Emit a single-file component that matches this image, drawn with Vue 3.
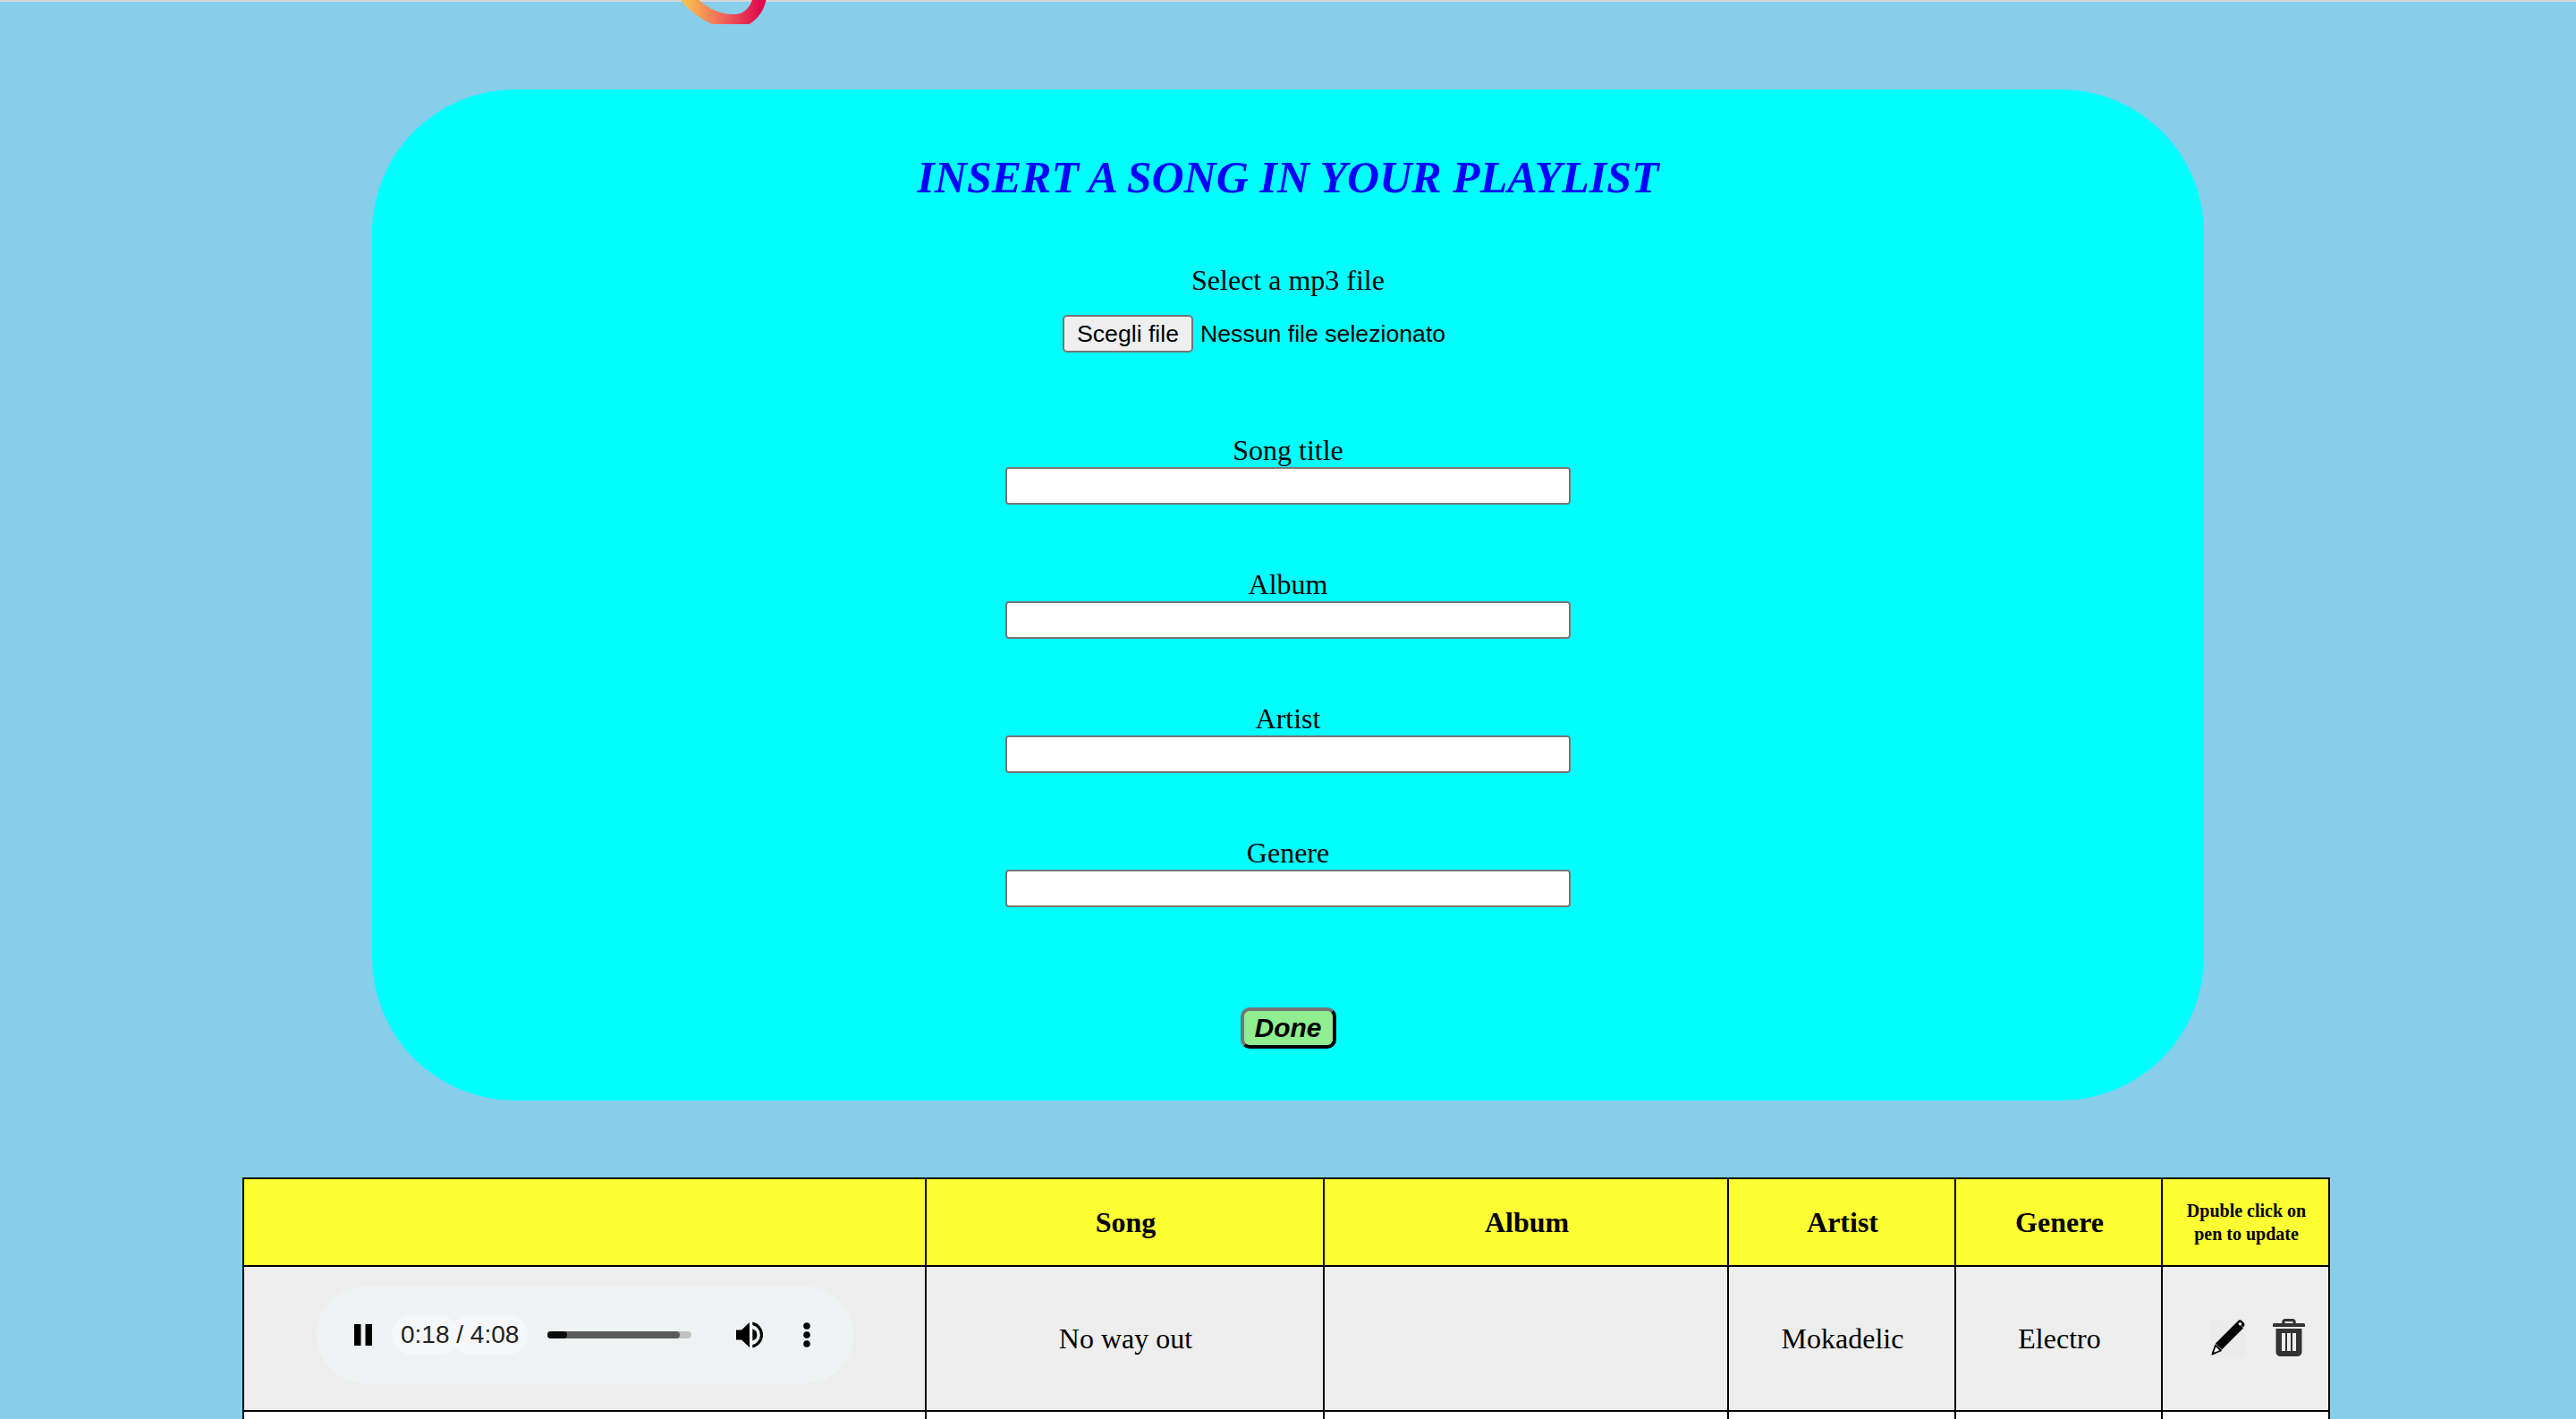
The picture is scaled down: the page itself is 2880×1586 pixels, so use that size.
<template>
  <div class="page">
    <div class="top-strip"></div>

    <!-- logo is cut by the top of the window -->
    <svg class="logo" width="110" height="27" viewBox="0 0 110 27" aria-hidden="true">
      <defs>
        <linearGradient id="logo-grad" x1="0" y1="0" x2="1" y2="0">
          <stop offset="0" stop-color="#fbbf4f" />
          <stop offset="0.5" stop-color="#f0665a" />
          <stop offset="1" stop-color="#de0a4e" />
        </linearGradient>
      </defs>
      <path d="M14 -6C28 13 48 24 70 23.500C86 23 96 10 98 -6" fill="none" stroke="url(#logo-grad)" stroke-width="15" />
    </svg>

    <form class="card" @submit.prevent>
      <h2 class="card__title">INSERT A SONG IN YOUR PLAYLIST</h2>

      <label class="card__label card__label--file" for="file-input">Select a mp3 file</label>
      <div class="file-row">
        <button id="file-input" type="button" class="file-btn">Scegli file</button>
        <span class="file-name">Nessun file selezionato</span>
      </div>

      <div v-for="f in fields" :key="f" class="field">
        <label class="card__label">{{ f }}</label>
        <input class="field__input" type="text" />
      </div>

      <button type="submit" class="done-btn">Done</button>
    </form>

    <table class="songs">
      <colgroup>
        <col v-for="w in colWidths" :key="w" :style="{ width: w + 'px' }" />
      </colgroup>
      <thead>
        <tr>
          <th></th>
          <th>Song</th>
          <th>Album</th>
          <th>Artist</th>
          <th>Genere</th>
          <th class="songs__hint">Dpuble click on<br />pen to update</th>
        </tr>
      </thead>
      <tbody>
        <tr class="songs__row--grey">
          <td>
            <div class="player">
              <svg class="player__pause" width="20" height="24" viewBox="0 0 20 24"><path d="M0 0h7.500v24H0zM12.500 0H20v24h-7.500z" fill="#000" /></svg>
              <div class="player__time">
                <span class="player__halo">0:18</span><span class="player__halo player__halo--rest">&nbsp;/ 4:08</span>
              </div>
              <div class="player__track">
                <div class="player__buffer" :style="{ width: '148px' }"></div>
                <div class="player__played" :style="{ width: '22px' }"></div>
              </div>
              <svg class="player__volume" width="30" height="30" viewBox="0 0 30 30">
                <path d="M0 9.500h6L15 1v28l-9-8.500H0z" fill="#000" />
                <path d="M18.300 8.500a6.700 6.700 0 0 1 0 13z" fill="#000" />
                <path d="M18.300 0.500a14.800 14.800 0 0 1 0 29v-3.600a11.200 11.200 0 0 0 0-21.800z" fill="#000" />
              </svg>
              <svg class="player__more" width="8" height="28" viewBox="0 0 8 28">
                <circle cx="4" cy="4" r="3.800" fill="#000" />
                <circle cx="4" cy="14" r="3.800" fill="#000" />
                <circle cx="4" cy="24" r="3.800" fill="#000" />
              </svg>
            </div>
          </td>
          <td>No way out</td>
          <td></td>
          <td>Mokadelic</td>
          <td>Electro</td>
          <td>
            <div class="actions">
              <svg class="actions__pen" width="40" height="42" viewBox="0 0 40 42">
                <rect width="40" height="42" fill="#ebebeb" />
                <path d="M30 3.500L37 10.500 13 34.500l-7-7z" fill="#000" />
                <path d="M31 2.500c1.500-1.500 3.200-1.500 4.500-.2l2 2c1.300 1.300 1.300 3 0 4.500l-.7.700-6.800-6z" fill="#000" />
                <circle cx="33.500" cy="5.800" r="1.800" fill="#e4e4e4" />
                <path d="M6 29.500l6 6-9.500 4z" fill="#fff" stroke="#000" stroke-width="1.800" stroke-linejoin="round" />
                <path d="M1.500 40.500l1.500-4.500 3 3z" fill="#000" />
              </svg>
              <svg class="actions__trash" width="36" height="42" viewBox="0 0 36 42">
                <path fill-rule="evenodd" d="M10.300 3.500C10.300 1.500 11.800 0 13.800 0h8.400c2 0 3.500 1.500 3.500 3.500V5h8.800C35.300 5 36 5.700 36 6.500V9H0V6.500C0 5.700.7 5 1.500 5h8.800zM13.500 3.500V5h9V3.500c0-.3-.2-.5-.5-.5h-8c-.3 0-.5.2-.5.500zM3.500 11h29v26c0 2.800-2.200 5-5 5h-19c-2.800 0-5-2.200-5-5zM10 16v20h4V16zM16 16v20h4V16zM22 16v20h4V16z" fill="#333" />
              </svg>
            </div>
          </td>
        </tr>
        <tr class="songs__row--empty">
          <td></td><td></td><td></td><td></td><td></td><td></td>
        </tr>
      </tbody>
    </table>
  </div>
</template>

<script setup>
const fields = ['Song title', 'Album', 'Artist', 'Genere']
const colWidths = [763, 445, 452, 254, 231, 187]
</script>

<style>
html, body {
  margin: 0;
  overflow: hidden;
}
</style>

<style scoped>
.page {
  position: relative;
  height: 1586px;
  overflow: hidden;
  background: #87ceeb;
  font-family: "Liberation Serif", serif;
  font-size: 32px;
  color: #000;
}

.top-strip {
  height: 2px;
  background: #d6d6d6;
}

.logo {
  position: absolute;
  left: 752px;
  top: 0;
}

.card {
  box-sizing: border-box;
  width: 2048px;
  height: 1130px;
  margin: 98px auto 0;
  padding-top: 70px;
  border-radius: 160px;
  background: #00ffff;
  display: flex;
  flex-direction: column;
  align-items: center;
}

.card__title {
  margin: 0;
  font-size: 50px;
  line-height: 56px;
  font-weight: bold;
  font-style: italic;
  color: #0000ff;
}

.card__label {
  display: block;
  text-align: center;
  line-height: 37px;
}

.card__label--file {
  margin-top: 69px;
}

.file-row {
  display: flex;
  align-items: center;
  gap: 8px;
  margin-top: 20px;
  margin-bottom: 91px;
  width: 504px;
  font-family: "Liberation Sans", sans-serif;
  font-size: 26.670px;
}

.file-btn {
  box-sizing: border-box;
  width: 146px;
  height: 42px;
  padding: 0;
  border: 2px solid #767676;
  border-radius: 5px;
  background: #efefef;
  color: #000;
  font: inherit;
}

.field {
  display: flex;
  flex-direction: column;
  align-items: center;
  margin-bottom: 71px;
}

.field__input {
  box-sizing: border-box;
  display: block;
  width: 632px;
  height: 42px;
  padding: 0;
  border: 2px solid #767676;
  border-radius: 4px;
  background: #fff;
}

.done-btn {
  box-sizing: border-box;
  width: 107px;
  height: 46px;
  margin-top: 41px;
  padding: 0;
  border: 4px outset #767676;
  border-top-color: #767676;
  border-left-color: #767676;
  border-right-color: #1f1f1f;
  border-bottom-color: #1f1f1f;
  border-radius: 10px;
  background: #90ee90;
  color: #000;
  font-family: "Liberation Sans", sans-serif;
  font-size: 30px;
  font-weight: bold;
  font-style: italic;
}

.songs {
  table-layout: fixed;
  width: 2332px;
  margin: 86px 0 0 271px;
  border-collapse: collapse;
  border: 2px solid #000;
  text-align: center;
}

.songs th,
.songs td {
  padding: 0 0 0 2px;
  border: 2px solid #000;
}

.songs th {
  height: 96px;
  background: #ffff33;
  font-weight: bold;
}

.songs .songs__hint {
  font-size: 20px;
  line-height: 26px;
}

.songs__row--grey td {
  height: 160px;
  background: #eeeeee;
}

.songs__row--empty td {
  height: 160px;
  background: #fff;
}

.player {
  position: relative;
  box-sizing: border-box;
  width: 600px;
  height: 108px;
  margin: 0 0 8px 79px;
  padding-left: 42px;
  border-radius: 54px;
  background: #f0f3f4;
  display: flex;
  align-items: center;
  font-family: "Liberation Sans", sans-serif;
}

.player__pause {
  flex: none;
}

.player__time {
  display: flex;
  margin-left: 22px;
  font-size: 28px;
  line-height: 44px;
  color: #222;
  white-space: nowrap;
}

.player__halo {
  padding: 0 10px;
  margin-right: -10px;
  border-radius: 22px;
  background: #f5f7f8;
}

.player__halo--rest {
  margin-right: 0;
  padding-left: 0;
}

.player__track {
  position: relative;
  flex: none;
  width: 161px;
  height: 8px;
  margin-left: 22px;
  border-radius: 4px;
  background: #c0c0c0;
}

.player__buffer,
.player__played {
  position: absolute;
  left: 0;
  top: 0;
  height: 8px;
  border-radius: 4px;
}

.player__buffer {
  background: #5a5a5a;
}

.player__played {
  background: #0a0a0a;
}

.player__volume {
  flex: none;
  margin-left: 50px;
}

.player__more {
  flex: none;
  margin-left: 45px;
}

.actions {
  display: flex;
  align-items: center;
  gap: 30px;
  margin-bottom: 2px;
  padding-left: 51px;
}

.actions svg {
  flex: none;
}
</style>
